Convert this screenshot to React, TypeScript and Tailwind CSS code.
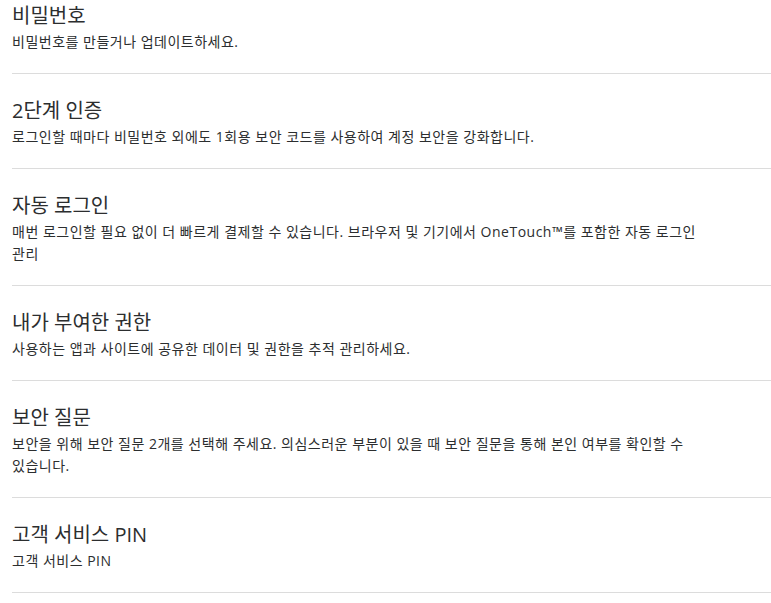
import React from "react";

const items = [
  { title: "비밀번호", desc: "비밀번호를 만들거나 업데이트하세요." },
  { title: "2단계 인증", desc: "로그인할 때마다 비밀번호 외에도 1회용 보안 코드를 사용하여 계정 보안을 강화합니다." },
  { title: "자동 로그인", desc: "매번 로그인할 필요 없이 더 빠르게 결제할 수 있습니다. 브라우저 및 기기에서 OneTouch™를 포함한 자동 로그인 관리" },
  { title: "내가 부여한 권한", desc: "사용하는 앱과 사이트에 공유한 데이터 및 권한을 추적 관리하세요." },
  { title: "보안 질문", desc: "보안을 위해 보안 질문 2개를 선택해 주세요. 의심스러운 부분이 있을 때 보안 질문을 통해 본인 여부를 확인할 수 있습니다." },
  { title: "고객 서비스 PIN", desc: "고객 서비스 PIN" },
];

export default function App() {
  return (
    <div
      className="bg-white text-[#2c2e2f] pl-3 min-h-[603px]"
      style={{ fontFamily: '"Open Sans", "Noto Sans CJK KR", sans-serif' }}
    >
      {items.map((it, i) => (
        <div
          key={i}
          className={`border-b border-[#dcdcdc] pb-[20px] ${i === 0 ? "pt-[2px]" : "pt-[23px]"}`}
        >
          <h2 className="text-[20px] leading-[27px] font-normal">{it.title}</h2>
          <p className="text-[14px] leading-[22px] mt-[2px] max-w-[696px] break-keep tracking-[0.5px]">{it.desc}</p>
        </div>
      ))}
    </div>
  );
}
